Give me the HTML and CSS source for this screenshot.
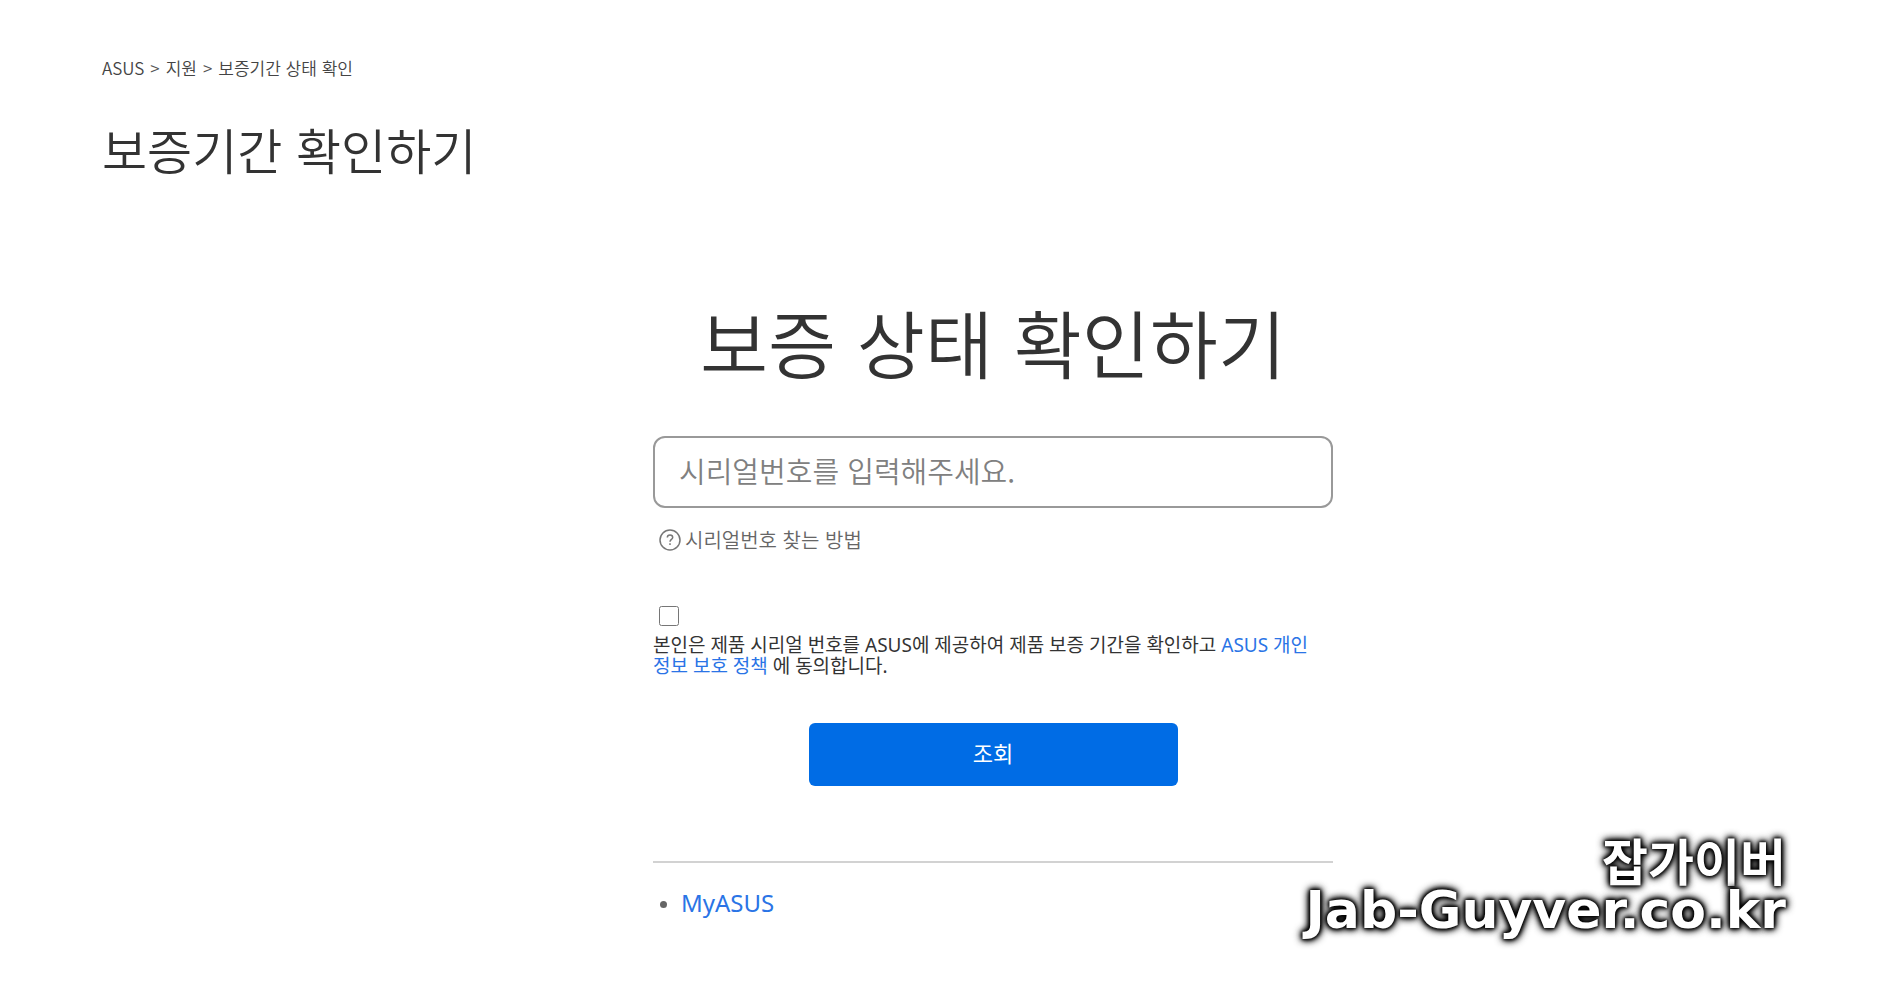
FILE: index.html
```html
<!DOCTYPE html>
<html lang="ko">
<head>
<meta charset="utf-8">
<meta name="viewport" content="width=device-width, initial-scale=1">
<title>보증기간 상태 확인</title>
<link rel="stylesheet" href="styles.css">
</head>
<body>
<div class="page">
  <nav class="breadcrumb">
    <a href="#">ASUS</a><span>&gt;</span><a href="#">지원</a><span>&gt;</span><a href="#">보증기간 상태 확인</a>
  </nav>
  <h1 class="page-title">보증기간 확인하기</h1>
  <main class="warranty">
    <h2 class="warranty-title">보증 상태 확인하기</h2>
    <form class="warranty-form">
      <input class="serial" type="text" aria-label="시리얼번호" placeholder="시리얼번호를 입력해주세요.">
      <a class="help" href="#">
        <svg class="help-icon" viewBox="0 0 22 22" aria-hidden="true">
          <circle cx="11" cy="11" r="10"/>
          <path d="M8.3 8.6c0-1.7 1.1-2.6 2.7-2.6s2.7 1 2.7 2.4c0 2-2.7 2.1-2.7 4.3"/>
          <path d="M11 14.3v1.7"/>
        </svg>
        <span>시리얼번호 찾는 방법</span>
      </a>
      <div class="consent">
        <input class="consent-box" type="checkbox" id="consent">
        <label class="consent-text" for="consent">본인은 제품 시리얼 번호를 ASUS에 제공하여 제품 보증 기간을 확인하고 <a href="#">ASUS 개인정보 보호 정책</a> 에 동의합니다.</label>
      </div>
      <button class="submit" type="button">조회</button>
    </form>
    <ul class="links">
      <li><a href="#">MyASUS</a></li>
    </ul>
  </main>
</div>
<div class="watermark">
  <div class="watermark-name">잡가이버</div>
  <div class="watermark-site">Jab-Guyver.co.kr</div>
</div>
</body>
</html>
```
FILE: styles.css
```css
* { box-sizing: border-box; }
body {
  margin: 0;
  position: relative;
  min-height: 100vh;
  background: #fff;
  color: #333;
  font-family: "Noto Sans", "Noto Sans CJK KR", sans-serif;
}
a { color: #2a74e6; text-decoration: none; }
.page { padding: 55px 6px 0 102px; }
.breadcrumb {
  display: flex;
  gap: 6px;
  font-family: "Noto Sans CJK KR", sans-serif;
  font-weight: 350;
  font-size: 17px;
  line-height: 26px;
  color: #555;
}
.breadcrumb a { color: #444; }
.page-title {
  margin: 32px 0 0;
  font-family: "Noto Sans CJK KR", sans-serif;
  font-size: 49px;
  line-height: 72px;
  font-weight: 350;
}
.warranty { max-width: 680px; margin: 102px auto 0; }
.warranty-title {
  margin: 0;
  font-family: "Noto Sans CJK KR", sans-serif;
  font-size: 74px;
  line-height: 108px;
  font-weight: 350;
  text-align: center;
  white-space: nowrap;
}
.warranty-form { display: flex; flex-direction: column; margin-top: 41px; }
.serial {
  height: 72px;
  padding: 0 24px 4px;
  border: 2px solid #999;
  border-radius: 12px;
  font-family: "Noto Sans CJK KR", sans-serif;
  font-weight: 350;
  font-size: 29px;
  color: #333;
}
.serial::placeholder { color: #808080; opacity: 1; }
.help {
  display: flex;
  align-items: center;
  align-self: flex-start;
  gap: 4px;
  margin: 18px 0 0 6px;
  font-family: "Noto Sans CJK KR", sans-serif;
  font-weight: 350;
  font-size: 20px;
  line-height: 28px;
  color: #666;
}
.help-icon { width: 22px; height: 22px; fill: none; stroke: #777; stroke-width: 1.5; }
.consent { display: flex; flex-direction: column; margin-top: 52px; }
.consent-box { width: 20px; height: 20px; margin: 0 0 9px 6px; }
.consent-text {
  padding-right: 12px;
  font-size: 19px;
  line-height: 21px;
}
.submit {
  align-self: center;
  width: 369px;
  height: 63px;
  margin-top: 46px;
  padding: 0 0 6px;
  border: 0;
  border-radius: 6px;
  background: #006ce5;
  color: #fff;
  font-family: "Noto Sans CJK KR", sans-serif;
  font-size: 22px;
}
.links {
  margin: 75px 0 0;
  padding: 24px 0 0 28px;
  border-top: 2px solid #d2d2d2;
  font-size: 24px;
  line-height: 32px;
}
.links li::marker { color: #666; font-size: 20px; }
.watermark {
  position: absolute;
  right: 104px;
  bottom: 66px;
  color: #fff;
  font-family: "DejaVu Sans", "Noto Sans CJK KR", sans-serif;
  font-weight: 700;
  text-align: right;
  text-shadow: 0 0 3px #000, 0 0 4px #000, 0 0 6px #000, 0 0 8px #000, 0 0 10px #222;
}
.watermark-name { font-family: "Noto Sans CJK KR", sans-serif; font-size: 50px; line-height: 50px; }
.watermark-site { font-size: 52px; line-height: 52px; white-space: nowrap; }
```
